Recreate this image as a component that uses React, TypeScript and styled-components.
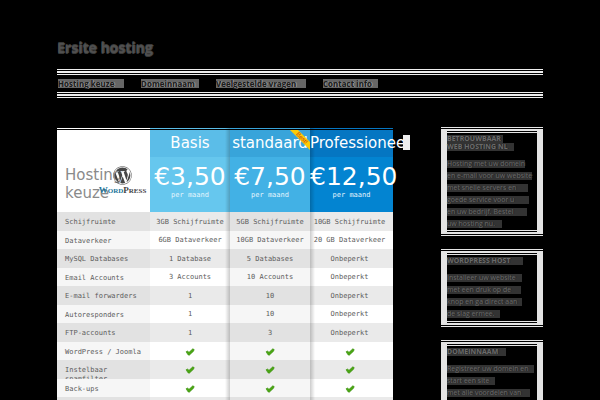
import React from "react";
import styled, { createGlobalStyle } from "styled-components";
import { FaWordpress } from "react-icons/fa";

const GlobalStyle = createGlobalStyle`
  * { box-sizing: border-box; }
  body { margin: 0; background: #000; }
`;

const Page = styled.div`
  height: 100vh;
  overflow: hidden;
  padding: 36px 57px 0;
  background: #000;
  font-family: "DejaVu Sans", sans-serif;
`;

const SiteTitle = styled.h1`
  margin: 0 0 9px;
  font: 700 14px/24px "Open Sans", sans-serif;
  color: #505050;
  text-shadow: 0 1px 0 #383838, 1px 0 0 #404040, 0 -1px 0 #383838;
`;

const Nav = styled.nav`
  display: flex;
  align-items: center;
  gap: 16px;
  height: 29px;
  background:
    linear-gradient(#eee 1px, #000 1px 2px, #eee 2px 4px, #000 4px 5px, #eee 5px 6px, transparent 6px) top / 100% 6px no-repeat,
    linear-gradient(#eee 1px, #000 1px 2px, #eee 2px 4px, #000 4px 5px, #eee 5px 6px, transparent 6px) bottom / 100% 6px no-repeat;
`;

const NavLink = styled.a<{ $width: number }>`
  min-width: ${(p) => p.$width}px;
  margin-left: 1px;
  white-space: nowrap;
  background: #666;
  color: #1c1c1c;
  text-decoration: none;
  text-shadow: 1px 0 0 #999;
  font: 700 8px/9px "Open Sans", sans-serif;
`;

const Content = styled.div`
  display: grid;
  grid-template-columns: minmax(0, 336fr) minmax(0, 102fr);
  align-items: start;
  gap: 48px;
  padding-top: 29px;
`;

const PlanTable = styled.table`
  width: 100%;
  margin-top: 1px;
  table-layout: fixed;
  border-collapse: separate;
  border-spacing: 0;
  color: #5c5c5c;
  font: 7px/9px "DejaVu Sans Mono", monospace;
  th, td { font-weight: 400; }
`;

const Col = styled.col<{ $width?: number }>`
  width: ${(p) => (p.$width ? `${p.$width}px` : "auto")};
`;

type Tone = "light" | "mid" | "deep";
const headColor = { light: "#5bbde8", mid: "#38a4da", deep: "#0576c2" };
const priceColor = { light: "#66c7ee", mid: "#42b1e5", deep: "#0384d1" };
const edge = {
  light: "linear-gradient(to left, rgba(0,0,0,.2), transparent 5px)",
  mid: "linear-gradient(transparent, transparent)",
  deep: "linear-gradient(to right, rgba(0,0,0,.2), transparent 5px)",
};

const ChoiceCell = styled.th`
  position: relative;
  height: 84px;
  padding: 0;
  vertical-align: top;
  text-align: left;
  background: linear-gradient(#fff 1px, #000 1px 2px, #fff 2px);
`;

const Choice = styled.div`
  width: 50px;
  padding: 38px 0 0 8px;
  color: #8a8a8a;
  font: 15px/18px "DejaVu Sans", sans-serif;
`;

const WordPress = styled.div`
  position: absolute;
  left: 43px;
  top: 38px;
  display: flex;
  flex-direction: column;
  align-items: center;
  width: 45px;
  color: #464646;
  font: 700 7px/9px "Liberation Serif", serif;
  svg { display: block; width: 19px; height: 19px; margin-bottom: 1px; }
  big { font-size: 9px; }
  b { color: #21759b; }
`;

const PlanName = styled.th<{ $tone: Tone }>`
  position: relative;
  height: 29px;
  padding: 0;
  color: #fff;
  white-space: nowrap;
  font: 15px/27px "DejaVu Sans", sans-serif;
  background:
    linear-gradient(transparent 1px, #000 1px 2px, transparent 2px),
    ${(p) => edge[p.$tone]},
    ${(p) => headColor[p.$tone]};
`;

const Label = styled.div`
  display: flex;
  justify-content: safe center;
  padding-top: 2px;
`;

const Spill = styled.i`
  position: absolute;
  left: 93px;
  top: 7px;
  width: 7px;
  height: 15px;
  background: #eee;
`;

const Ribbon = styled.svg`
  position: absolute;
  right: 0;
  top: 2px;
  width: 20px;
  height: 20px;
`;

const PriceCell = styled.td<{ $tone: Tone }>`
  height: 55px;
  padding: 0;
  vertical-align: top;
  text-align: center;
  color: #e4f5fd;
  white-space: nowrap;
  background: ${(p) => edge[p.$tone]}, ${(p) => priceColor[p.$tone]};
`;

const Price = styled.div`
  display: flex;
  justify-content: safe center;
  padding-top: 6px;
  color: #fff;
  font: 25px/28px "DejaVu Sans", sans-serif;
`;

const Row = styled.tr<{ $odd: boolean }>`
  --side: ${(p) => (p.$odd ? "#e2e2e2" : "#f6f6f6")};
  --plain: ${(p) => (p.$odd ? "#eaeaea" : "#fff")};
  --row: ${(p) => (p.$odd ? 19 : 18)}px;
`;

const Feature = styled.th`
  padding: 0;
  text-align: left;
  background: var(--side);
`;

const FeatureText = styled.div`
  height: var(--row);
  overflow: hidden;
  padding: 6px 5px 0 8px;
`;

const Value = styled.td<{ $tone: Tone }>`
  padding: 1px ${(p) => (p.$tone === "deep" ? 4 : 0)}px 0 0;
  text-align: center;
  white-space: nowrap;
  background: ${(p) => edge[p.$tone]}, ${(p) => (p.$tone === "mid" ? "var(--side)" : "var(--plain)")};
  svg { display: block; margin: 0 auto; }
`;

const Sidebar = styled.aside`
  display: grid;
  gap: 13px;
`;

const Widget = styled.section<{ $height: number }>`
  min-height: ${(p) => p.$height}px;
  padding: 8px 6px 6px;
  background:
    linear-gradient(#e6e6e6, #e6e6e6) 0 0 / 100% 1px no-repeat,
    linear-gradient(#e6e6e6, #e6e6e6) 0 100% / 100% 1px no-repeat,
    linear-gradient(#000, #000) 0 1px / 100% 1px no-repeat,
    linear-gradient(#000, #000) 0 calc(100% - 1px) / 100% 1px no-repeat,
    linear-gradient(#000, #000) 6px 4px / calc(100% - 12px) 1px no-repeat,
    linear-gradient(#000, #000) 6px calc(100% - 4px) / calc(100% - 12px) 1px no-repeat,
    linear-gradient(#000, #000) 6px 6px / calc(100% - 12px) calc(100% - 12px) no-repeat,
    #e4e4e4;
`;

const WidgetTitle = styled.h2`
  margin: 0 0 7px;
  font: 700 7px/8px "Open Sans", sans-serif;
`;

const WidgetText = styled.p`
  margin: 0;
  font: 7px/12px "Open Sans", sans-serif;
`;

const Line = styled.span<{ $width: number }>`
  display: block;
  width: fit-content;
  min-width: ${(p) => p.$width}px;
  white-space: nowrap;
  color: #6a6a6a;
  text-shadow: 1px 0 0 #222;
  background: linear-gradient(#333, #333) 0 center / 100% 8px no-repeat;
`;

const Check = () => (
  <svg width="10" height="8" viewBox="0 0 10 8" role="img" aria-label="Inbegrepen">
    <path d="M1 3.8 2.5 3 4 4.3 7.8.8 9.2 1.5 8.6 3.2 4.3 7.2 3.2 7Z" fill="#4aa514" stroke="#3c9210" strokeWidth=".6" />
  </svg>
);

const tones: Tone[] = ["light", "mid", "deep"];
const features: [string, string[]][] = [
  ["Schijfruimte", ["3GB Schijfruimte", "5GB Schijfruimte", "10GB Schijfruimte"]],
  ["Dataverkeer", ["6GB Dataverkeer", "10GB Dataverkeer", "20 GB Dataverkeer"]],
  ["MySQL Databases", ["1 Database", "5 Databases", "Onbeperkt"]],
  ["Email Accounts", ["3 Accounts", "10 Accounts", "Onbeperkt"]],
  ["E-mail forwarders", ["1", "10", "Onbeperkt"]],
  ["Autoresponders", ["1", "10", "Onbeperkt"]],
  ["FTP-accounts", ["1", "3", "Onbeperkt"]],
  ["WordPress / Joomla", ["", "", ""]],
  ["Instelbaar spamfilter", ["", "", ""]],
  ["Back-ups", ["", "", ""]],
  ["", [" ", " ", " "]],
];

const links: [string, number][] = [
  ["Hosting keuze", 66],
  ["Domeinnaam", 58],
  ["Veelgestelde vragen", 90],
  ["Contact info", 55],
];

type TextLine = [string, number];
const widgets: { height: number; title: TextLine[]; text: TextLine[] }[] = [
  {
    height: 109,
    title: [["BETROUWBAAR", 56], ["WEB HOSTING NL", 67]],
    text: [
      ["Hosting met uw domein", 78],
      ["en e-mail voor uw website", 85],
      ["met snelle servers en", 81],
      ["goede service voor u", 82],
      ["en uw bedrijf. Bestel", 80],
      ["uw hosting nu.", 55],
    ],
  },
  {
    height: 78,
    title: [["WORDPRESS HOST", 76]],
    text: [
      ["Installeer uw website", 75],
      ["met een druk op de", 74],
      ["knop en ga direct aan", 75],
      ["de slag ermee.", 53],
    ],
  },
  {
    height: 90,
    title: [["DOMEINNAAM", 59]],
    text: [
      ["Registreer uw domein en", 87],
      ["start een site", 48],
      ["met alle voordelen van", 83],
      ["een hosting pakket.", 75],
    ],
  },
];

export default function App() {
  return (
    <>
      <GlobalStyle />
      <Page>
        <header>
          <SiteTitle>Ersite hosting</SiteTitle>
          <Nav>
            {links.map(([label, width]) => (
              <NavLink key={label} href="#" $width={width}>{label}</NavLink>
            ))}
          </Nav>
        </header>
        <Content>
          <PlanTable>
            <colgroup>
              <Col $width={93} />
              <Col $width={80} />
              <Col $width={80} />
              <Col />
            </colgroup>
            <thead>
              <tr>
                <ChoiceCell rowSpan={2}>
                  <Choice>Hosting keuze</Choice>
                  <WordPress>
                    <FaWordpress />
                    <span><b><big>W</big>ORD</b><big>P</big>RESS</span>
                  </WordPress>
                </ChoiceCell>
                <PlanName $tone="light"><Label>Basis</Label></PlanName>
                <PlanName $tone="mid">
                  <Label>standaard</Label>
                  <Ribbon viewBox="0 0 20 20">
                    <path d="M0 0H8L20 12V20Z" fill="#fccb05" />
                    <text x="12" y="10" transform="rotate(45 12 8)" textAnchor="middle" fontSize="6" fontFamily="Liberation Sans, sans-serif" fill="#c43c12">Best!</text>
                  </Ribbon>
                </PlanName>
                <PlanName $tone="deep"><Label>Professioneel</Label><Spill /></PlanName>
              </tr>
              <tr>
                {["€3,50", "€7,50", "€12,50"].map((price, i) => (
                  <PriceCell key={price} $tone={tones[i]}>
                    <Price>{price}</Price>
                    per maand
                  </PriceCell>
                ))}
              </tr>
            </thead>
            <tbody>
              {features.map(([name, values], r) => (
                <Row key={name} $odd={r % 2 === 0}>
                  <Feature scope="row"><FeatureText>{name}</FeatureText></Feature>
                  {values.map((value, i) => (
                    <Value key={i} $tone={tones[i]}>{value || <Check />}</Value>
                  ))}
                </Row>
              ))}
            </tbody>
          </PlanTable>
          <Sidebar>
            {widgets.map((w) => (
              <Widget key={w.height} $height={w.height}>
                <WidgetTitle>
                  {w.title.map(([t, n]) => <Line key={t} $width={n}>{t}</Line>)}
                </WidgetTitle>
                <WidgetText>
                  {w.text.map(([t, n]) => <Line key={t} $width={n}>{t}</Line>)}
                </WidgetText>
              </Widget>
            ))}
          </Sidebar>
        </Content>
      </Page>
    </>
  );
}
